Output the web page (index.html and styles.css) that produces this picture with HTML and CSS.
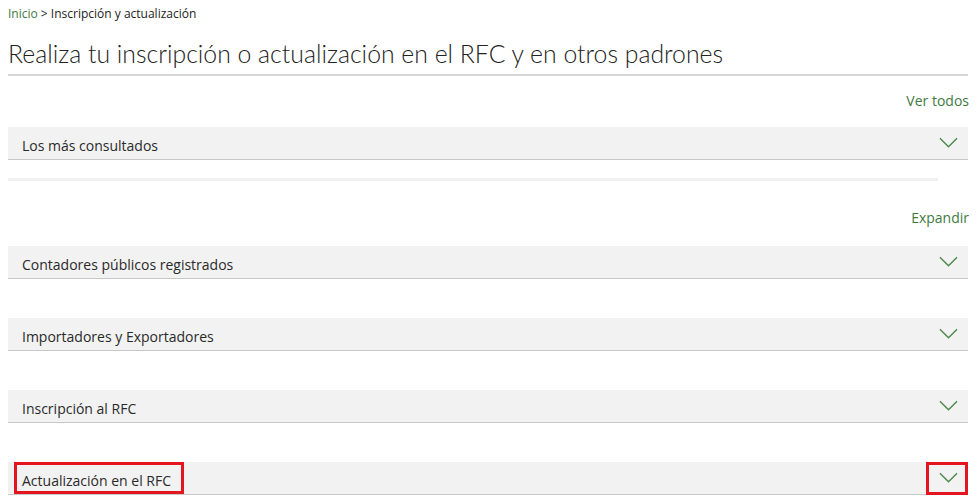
FILE: index.html
```html
<!DOCTYPE html>
<html lang="es">
<head>
    <meta charset="UTF-8">
    <title>Inscripción y actualización</title>
    <link rel="stylesheet" href="styles.css">
</head>
<body>
    <div class="page">
        <div class="breadcrumb"><a href="#">Inicio</a> &gt; Inscripción y actualización</div>
        <h1>Realiza tu inscripción o actualización en el RFC y en otros padrones</h1>

        <div class="link-row"><a href="#">Ver todos</a></div>
        <div class="panel">
            <span>Los más consultados</span>
            <svg class="chevron" viewBox="0 0 20 12"><path d="M1 1 L10 10 L19 1"/></svg>
        </div>
        <div class="spacer-line"></div>

        <div class="link-row expand"><a href="#">Expandir</a></div>
        <div class="panel">
            <span>Contadores públicos registrados</span>
            <svg class="chevron" viewBox="0 0 20 12"><path d="M1 1 L10 10 L19 1"/></svg>
        </div>
        <div class="panel">
            <span>Importadores y Exportadores</span>
            <svg class="chevron" viewBox="0 0 20 12"><path d="M1 1 L10 10 L19 1"/></svg>
        </div>
        <div class="panel">
            <span>Inscripción al RFC</span>
            <svg class="chevron" viewBox="0 0 20 12"><path d="M1 1 L10 10 L19 1"/></svg>
        </div>
        <div class="panel">
            <span class="mark-text">Actualización en el RFC</span>
            <svg class="chevron" viewBox="0 0 20 12"><path d="M1 1 L10 10 L19 1"/></svg>
            <div class="mark mark-left"></div>
            <div class="mark mark-right"></div>
        </div>
    </div>
</body>
</html>
```

FILE: styles.css
```css
body {
    margin: 0;
    font-family: "Open Sans", "Liberation Sans", sans-serif;
    color: #222;
    background: #fff;
}
.page {
    width: 960px;
    margin: 0 8px;
}
a {
    color: #3f7a3f;
    text-decoration: none;
}
.breadcrumb {
    font-size: 12px;
    padding-top: 5px;
    height: 18px;
}
h1 {
    font-family: Lato, "Open Sans", sans-serif;
    font-weight: 300;
    font-size: 24.8px;
    margin: 15px 0 0 0;
    padding-bottom: 4px;
    line-height: 32px;
    border-bottom: 2px solid #d6d6d6;
}
.link-row {
    text-align: right;
    font-size: 14px;
    height: 25px;
    margin-top: 15px;
    margin-right: -1px;
}
.panel {
    position: relative;
    display: flex;
    align-items: center;
    justify-content: space-between;
    height: 32px;
    padding: 0 10px 0 14px;
    background: #f2f2f2;
    border-bottom: 1px solid #c8c8c8;
    font-size: 14px;
    color: #2a2a2a;
    margin-top: 11px;
    margin-bottom: 39px;
}
.panel span {
    padding-top: 4px;
}
.chevron {
    width: 19px;
    height: 12px;
    fill: none;
    stroke: #4c8a4c;
    stroke-width: 1.5;
}
.spacer-line {
    width: 930px;
    height: 3px;
    background: #f0f0f0;
    margin-top: -21px;
}
.expand {
    margin-top: 27px;
}
.expand + .panel {
    margin-top: 13px;
}
.mark {
    position: absolute;
    border: 3px solid #e3151f;
    box-sizing: border-box;
}
.mark-left {
    left: 6px;
    top: 0;
    width: 170px;
    height: 32px;
}
.mark-right {
    right: 0;
    top: 0;
    width: 42px;
    height: 33px;
}
```
